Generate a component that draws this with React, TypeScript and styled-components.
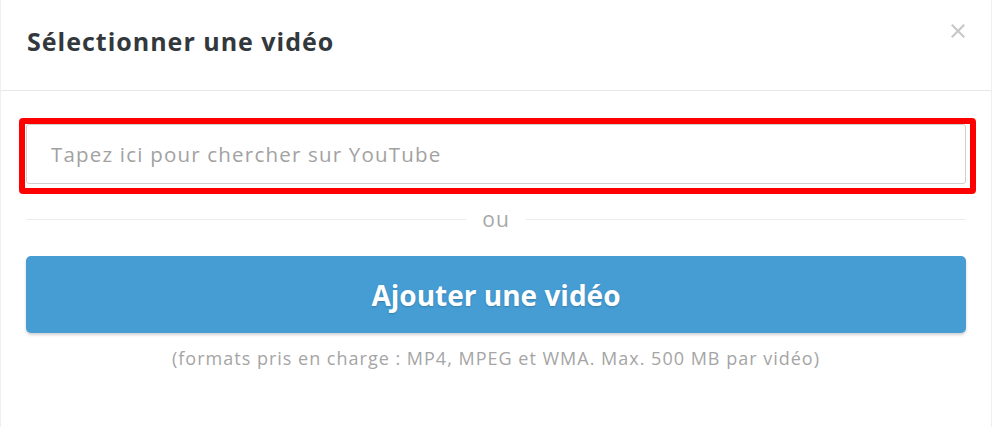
import styled, { createGlobalStyle } from "styled-components";

const GlobalStyle = createGlobalStyle`
  html, body {
    margin: 0;
    padding: 0;
    background: #ffffff;
  }
  body {
    font-family: "Open Sans", "Lato", sans-serif;
  }
  * {
    box-sizing: border-box;
  }
`;

const App = () => {
  return (
    <>
      <GlobalStyle />
      <Modal>
        <Header>
          <Title>Sélectionner une vidéo</Title>
          <CloseButton aria-label="Fermer">
            <svg width="14" height="14" viewBox="0 0 14 14">
              <path
                d="M1.5 1.5 L12.5 12.5 M12.5 1.5 L1.5 12.5"
                stroke="#c8c8c8"
                strokeWidth="2.2"
                strokeLinecap="square"
              />
            </svg>
          </CloseButton>
        </Header>
        <Body>
          <Highlight>
            <SearchInput placeholder="Tapez ici pour chercher sur YouTube" />
          </Highlight>
          <Divider>
            <Line />
            <DividerText>ou</DividerText>
            <Line />
          </Divider>
          <UploadButton>Ajouter une vidéo</UploadButton>
          <Note>
            (formats pris en charge : MP4, MPEG et WMA. Max. 500 MB par vidéo)
          </Note>
        </Body>
      </Modal>
    </>
  );
};

export default App;

const Modal = styled.div`
  width: 992px;
  height: 427px;
  background: #ffffff;
  border-left: 1px solid #efefef;
  border-right: 1px solid #efefef;
  display: flex;
  flex-direction: column;
`;

const Header = styled.div`
  height: 91px;
  display: flex;
  align-items: flex-start;
  justify-content: space-between;
  padding: 24px 26px 0 26px;
  border-bottom: 1px solid #e8e8e8;
`;

const Title = styled.h1`
  margin: 0;
  font-size: 25px;
  line-height: 34px;
  font-weight: 700;
  letter-spacing: 1px;
  color: #33383d;
`;

const CloseButton = styled.button`
  border: none;
  background: none;
  padding: 0;
  width: 14px;
  height: 14px;
  display: flex;
  cursor: pointer;
`;

const Body = styled.div`
  padding: 33px 25px 0 25px;
  display: flex;
  flex-direction: column;
`;

const Highlight = styled.div`
  border: 6px solid #ff0000;
  border-radius: 4px;
  padding: 0 4px 4px 1px;
  margin: -6px -10px 0 -7px;
`;

const SearchInput = styled.input`
  display: block;
  width: 100%;
  height: 60px;
  border: 1px solid #cfcfcf;
  border-radius: 3px;
  padding: 0 24px;
  font-family: "Open Sans", "Lato", sans-serif;
  font-size: 20.5px;
  letter-spacing: 1.2px;
  color: #333;
  outline: none;
  &::placeholder {
    color: #a2a2a2;
  }
`;

const Divider = styled.div`
  display: flex;
  align-items: center;
  gap: 16px;
  margin-top: 13px;
  height: 24px;
`;

const Line = styled.div`
  flex: 1;
  height: 1px;
  background: #ececec;
`;

const DividerText = styled.span`
  font-size: 21px;
  line-height: 24px;
  letter-spacing: 1px;
  color: #a8a8a8;
`;

const UploadButton = styled.button`
  margin-top: 25px;
  height: 77px;
  border: none;
  border-radius: 5px;
  background: #459dd4;
  box-shadow: 0 2px 3px rgba(0, 0, 0, 0.18);
  color: #ffffff;
  font-family: "Open Sans", "Lato", sans-serif;
  font-size: 28px;
  font-weight: 700;
  text-shadow: 0 1px 2px rgba(0, 0, 0, 0.2);
  cursor: pointer;
`;

const Note = styled.p`
  margin: 14px 0 0 0;
  text-align: center;
  font-size: 18px;
  line-height: 22px;
  letter-spacing: 1px;
  color: #a5a5a5;
`;
